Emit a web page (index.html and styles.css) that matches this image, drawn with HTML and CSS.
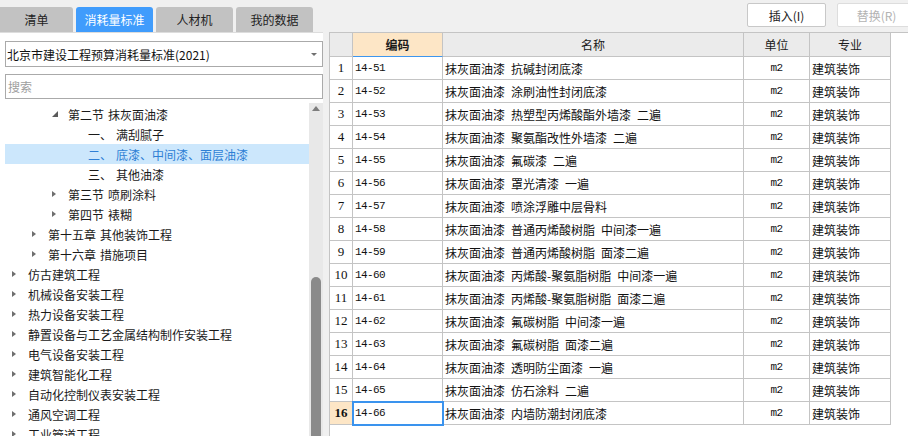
FILE: index.html
```html
<!DOCTYPE html>
<html lang="zh-CN">
<head>
<meta charset="utf-8">
<title>消耗量标准</title>
<link rel="stylesheet" href="styles.css">
</head>
<body>
<div class="app">
  <div class="topbar">
    <div class="tabs">
      <div class="tab first">清单</div>
      <div class="tab active">消耗量标准</div>
      <div class="tab">人材机</div>
      <div class="tab">我的数据</div>
    </div>
    <div class="actions">
      <div class="btn">插入(I)</div>
      <div class="btn disabled">替换(R)</div>
    </div>
  </div>
  <div class="main">
    <div class="left">
      <div class="combo"><span>北京市建设工程预算消耗量标准(2021)</span><span class="caret"></span></div>
      <div class="search">搜索</div>
      <div class="tree-wrap">
        <div class="tree">
          <div class="row l2"><span class="tog"><span class="tri-d"></span></span>第二节 抹灰面油漆</div>
          <div class="row l3"><span class="tog"></span>一、 满刮腻子</div>
          <div class="row l3 sel"><span class="tog"></span>二、 底漆、中间漆、面层油漆</div>
          <div class="row l3"><span class="tog"></span>三、 其他油漆</div>
          <div class="row l2"><span class="tog"><span class="tri-r"></span></span>第三节 喷刷涂料</div>
          <div class="row l2"><span class="tog"><span class="tri-r"></span></span>第四节 裱糊</div>
          <div class="row l1"><span class="tog"><span class="tri-r"></span></span>第十五章 其他装饰工程</div>
          <div class="row l1"><span class="tog"><span class="tri-r"></span></span>第十六章 措施项目</div>
          <div class="row"><span class="tog"><span class="tri-r"></span></span>仿古建筑工程</div>
          <div class="row"><span class="tog"><span class="tri-r"></span></span>机械设备安装工程</div>
          <div class="row"><span class="tog"><span class="tri-r"></span></span>热力设备安装工程</div>
          <div class="row"><span class="tog"><span class="tri-r"></span></span>静置设备与工艺金属结构制作安装工程</div>
          <div class="row"><span class="tog"><span class="tri-r"></span></span>电气设备安装工程</div>
          <div class="row"><span class="tog"><span class="tri-r"></span></span>建筑智能化工程</div>
          <div class="row"><span class="tog"><span class="tri-r"></span></span>自动化控制仪表安装工程</div>
          <div class="row"><span class="tog"><span class="tri-r"></span></span>通风空调工程</div>
          <div class="row"><span class="tog"><span class="tri-r"></span></span>工业管道工程</div>
        </div>
        <div class="scrollbar">
          <div class="arrow-box"><span class="arrow-up"></span></div>
          <div class="thumb"></div>
        </div>
      </div>
    </div>
    <div class="splitter"></div>
    <div class="right">
      <table class="grid">
        <colgroup>
          <col class="c-rn"><col class="c-code"><col class="c-name"><col class="c-unit"><col class="c-spec">
        </colgroup>
        <thead>
          <tr><th></th><th class="cur">编码</th><th>名称</th><th>单位</th><th>专业</th></tr>
        </thead>
        <tbody>
          <tr><td class="rn">1</td><td class="code">14-51</td><td class="name">抹灰面油漆 抗碱封闭底漆</td><td class="unit">m2</td><td class="spec">建筑装饰</td></tr>
          <tr><td class="rn">2</td><td class="code">14-52</td><td class="name">抹灰面油漆 涂刷油性封闭底漆</td><td class="unit">m2</td><td class="spec">建筑装饰</td></tr>
          <tr><td class="rn">3</td><td class="code">14-53</td><td class="name">抹灰面油漆 热塑型丙烯酸酯外墙漆 二遍</td><td class="unit">m2</td><td class="spec">建筑装饰</td></tr>
          <tr><td class="rn">4</td><td class="code">14-54</td><td class="name">抹灰面油漆 聚氨酯改性外墙漆 二遍</td><td class="unit">m2</td><td class="spec">建筑装饰</td></tr>
          <tr><td class="rn">5</td><td class="code">14-55</td><td class="name">抹灰面油漆 氟碳漆 二遍</td><td class="unit">m2</td><td class="spec">建筑装饰</td></tr>
          <tr><td class="rn">6</td><td class="code">14-56</td><td class="name">抹灰面油漆 罩光清漆 一遍</td><td class="unit">m2</td><td class="spec">建筑装饰</td></tr>
          <tr><td class="rn">7</td><td class="code">14-57</td><td class="name">抹灰面油漆 喷涂浮雕中层骨料</td><td class="unit">m2</td><td class="spec">建筑装饰</td></tr>
          <tr><td class="rn">8</td><td class="code">14-58</td><td class="name">抹灰面油漆 普通丙烯酸树脂 中间漆一遍</td><td class="unit">m2</td><td class="spec">建筑装饰</td></tr>
          <tr><td class="rn">9</td><td class="code">14-59</td><td class="name">抹灰面油漆 普通丙烯酸树脂 面漆二遍</td><td class="unit">m2</td><td class="spec">建筑装饰</td></tr>
          <tr><td class="rn">10</td><td class="code">14-60</td><td class="name">抹灰面油漆 丙烯酸-聚氨脂树脂 中间漆一遍</td><td class="unit">m2</td><td class="spec">建筑装饰</td></tr>
          <tr><td class="rn">11</td><td class="code">14-61</td><td class="name">抹灰面油漆 丙烯酸-聚氨脂树脂 面漆二遍</td><td class="unit">m2</td><td class="spec">建筑装饰</td></tr>
          <tr><td class="rn">12</td><td class="code">14-62</td><td class="name">抹灰面油漆 氟碳树脂 中间漆一遍</td><td class="unit">m2</td><td class="spec">建筑装饰</td></tr>
          <tr><td class="rn">13</td><td class="code">14-63</td><td class="name">抹灰面油漆 氟碳树脂 面漆二遍</td><td class="unit">m2</td><td class="spec">建筑装饰</td></tr>
          <tr><td class="rn">14</td><td class="code">14-64</td><td class="name">抹灰面油漆 透明防尘面漆 一遍</td><td class="unit">m2</td><td class="spec">建筑装饰</td></tr>
          <tr><td class="rn">15</td><td class="code">14-65</td><td class="name">抹灰面油漆 仿石涂料 二遍</td><td class="unit">m2</td><td class="spec">建筑装饰</td></tr>
          <tr class="cur-row"><td class="rn">16</td><td class="code selected">14-66</td><td class="name">抹灰面油漆 内墙防潮封闭底漆</td><td class="unit">m2</td><td class="spec">建筑装饰</td></tr>
        </tbody>
      </table>
    </div>
  </div>
</div>
</body>
</html>
```

FILE: styles.css
```css
* { box-sizing: border-box; margin: 0; padding: 0; }

body {
  margin: 0;
  font-family: "Noto Sans CJK SC", "Noto Sans", sans-serif;
  font-size: 12px;
  color: #1a1a1a;
  background: #ffffff;
}

.app {
  width: 908px;
  height: 436px;
  overflow: hidden;
  background: #f0f0f0;
  display: flex;
  flex-direction: column;
}

/* top bar */
.topbar {
  height: 32px;
  flex-shrink: 0;
  display: flex;
}

.tabs {
  display: flex;
  gap: 3px;
  padding-top: 7px;
  flex-shrink: 0;
}

.tab {
  width: 77px;
  height: 25px;
  background: #c2c2c2;
  border-radius: 3px 3px 0 0;
  display: flex;
  align-items: center;
  justify-content: center;
  color: #222222;
}

.tab.first { width: 73px; border-top-left-radius: 0; }

.tab.active { background: #409cfc; color: #ffffff; }

.actions {
  display: flex;
  gap: 11px;
  padding-top: 3px;
  margin-left: 434px;
  flex-shrink: 0;
}

.btn {
  width: 79px;
  height: 24px;
  background: #ffffff;
  border: 1px solid #c8c8c8;
  border-radius: 2px;
  display: flex;
  align-items: center;
  justify-content: center;
  color: #222222;
  flex-shrink: 0;
}

.btn.disabled { color: #b3b3b3; border-color: #dddddd; }

/* main */
.main {
  flex: 1;
  min-height: 0;
  display: flex;
}

.left {
  width: 323px;
  flex-shrink: 0;
  background: #ffffff;
  border-top: 1px solid #dddddd;
  padding: 8px 0 0 5px;
  display: flex;
  flex-direction: column;
}

.combo {
  height: 26px;
  flex-shrink: 0;
  border: 1px solid #aaaaaa;
  padding: 0 5px 0 1px;
  display: flex;
  align-items: center;
  justify-content: space-between;
  color: #111111;
}

.caret {
  width: 0;
  height: 0;
  border-left: 3px solid transparent;
  border-right: 3px solid transparent;
  border-top: 3px solid #707070;
}

.search {
  margin-top: 7px;
  height: 25px;
  flex-shrink: 0;
  border: 1px solid #aaaaaa;
  padding-left: 2px;
  display: flex;
  align-items: center;
  color: #9e9e9e;
}

.tree-wrap {
  margin-top: 4px;
  flex: 1;
  min-height: 0;
  display: flex;
  overflow: hidden;
}

.tree {
  flex: 1;
  padding-top: 1px;
  word-spacing: 1.3px;
  color: #1a1a1a;
}

.row {
  height: 20px;
  display: flex;
  align-items: center;
  white-space: nowrap;
}

.row.l1 { padding-left: 20px; }
.row.l2 { padding-left: 40px; }
.row.l3 { padding-left: 60px; }

.row.sel { background: #cce7fc; color: #2e7fd5; }

.tog {
  width: 23px;
  flex-shrink: 0;
  display: flex;
  align-items: center;
  padding-left: 7px;
}

.tri-r {
  width: 0;
  height: 0;
  border-top: 3.5px solid transparent;
  border-bottom: 3.5px solid transparent;
  border-left: 4px solid #6e6e6e;
}

.tri-d {
  width: 0;
  height: 0;
  border-left: 6px solid transparent;
  border-bottom: 6px solid #5a5a5a;
}

.scrollbar {
  width: 14px;
  flex-shrink: 0;
  background: #e8e8e8;
  display: flex;
  flex-direction: column;
}

.arrow-box {
  height: 14px;
  flex-shrink: 0;
  display: flex;
  justify-content: center;
  padding-top: 3px;
}

.arrow-up {
  width: 0;
  height: 0;
  border-left: 4px solid transparent;
  border-right: 4px solid transparent;
  border-bottom: 5px solid #7d7d7d;
}

.thumb {
  margin-top: 160px;
  margin-left: 2px;
  width: 10px;
  flex: 1;
  background: #8a8a8a;
  border-radius: 5px 5px 0 0;
}

.splitter {
  width: 6px;
  flex-shrink: 0;
  background: #f0f0f0;
}

.right {
  flex: 1;
  background: #ffffff;
  border-top: 1px solid #c4c4c4;
  border-left: 1px solid #c4c4c4;
}

/* grid */
.grid {
  border-collapse: separate;
  border-spacing: 0;
  table-layout: fixed;
  width: 561px;
}

.c-rn { width: 23px; }
.c-code { width: 90px; }
.c-name { width: 301px; }
.c-unit { width: 66px; }
.c-spec { width: 81px; }

.grid th,
.grid td {
  border-right: 1px solid #c4c4c4;
  border-bottom: 1px solid #c4c4c4;
  padding: 0;
  white-space: nowrap;
  overflow: hidden;
}

.grid th {
  height: 24px;
  background: #ebebeb;
  font-weight: normal;
  color: #1a1a1a;
  text-align: center;
}

.grid th.cur {
  background: #fde6c6;
  font-weight: bold;
  border-bottom-color: #3d96ee;
}

.grid td {
  height: 23px;
  color: #111111;
}

.grid td.rn {
  text-align: center;
  font-family: "Liberation Serif", "Noto Serif", serif;
  font-size: 13px;
}

.grid td.code {
  padding-left: 2px;
  font-family: "Liberation Mono", "DejaVu Sans Mono", monospace;
  font-size: 11px;
  letter-spacing: -0.6px;
}

.grid td.name {
  padding-left: 2px;
  word-spacing: 3.3px;
}

.grid td.unit {
  text-align: center;
  font-family: "Liberation Mono", "DejaVu Sans Mono", monospace;
  font-size: 11px;
  letter-spacing: -0.6px;
}

.grid td.spec { padding-left: 2px; }

.cur-row td.rn { background: #fde6c6; font-weight: bold; }

.grid td.selected {
  outline: 2px solid #3a93ee;
  outline-offset: -1px;
}
```
